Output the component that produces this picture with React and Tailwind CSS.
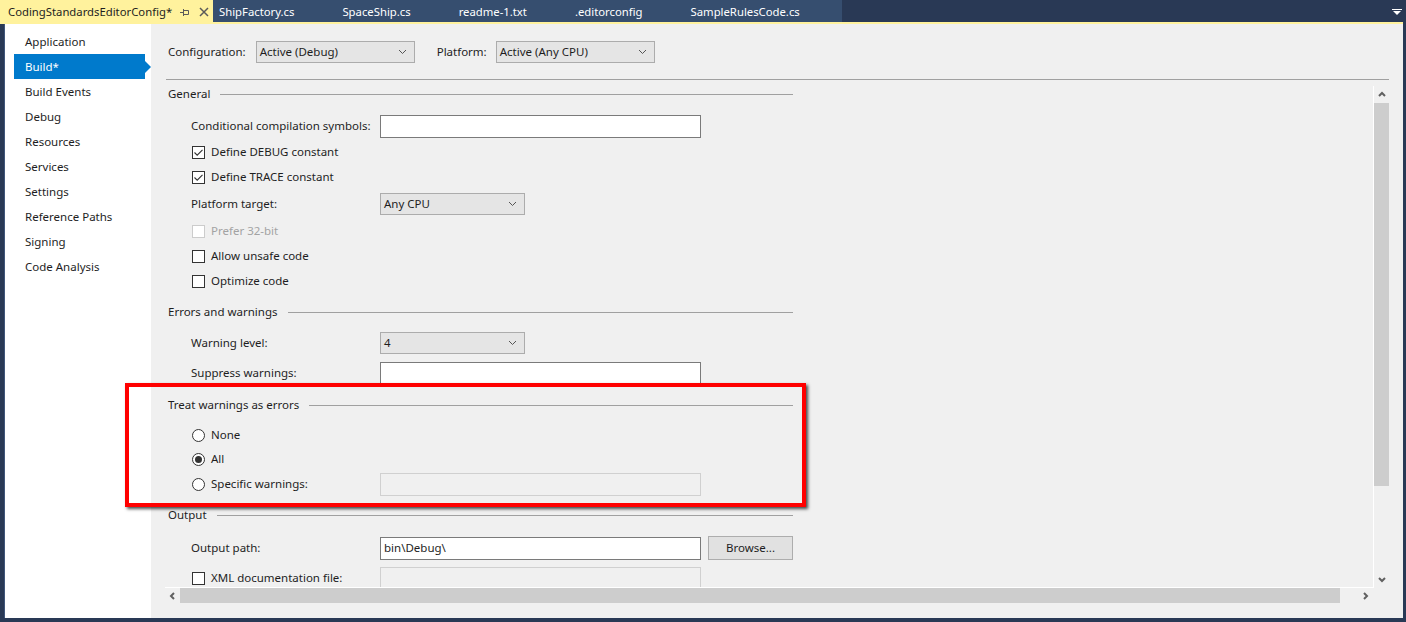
import React from 'react';

const tabs = ['ShipFactory.cs', 'SpaceShip.cs', 'readme-1.txt', '.editorconfig', 'SampleRulesCode.cs'];
const navItems = ['Application', 'Build*', 'Build Events', 'Debug', 'Resources', 'Services', 'Settings', 'Reference Paths', 'Signing', 'Code Analysis'];

function Chevron({ dir = 'down', className = '' }) {
  const paths = {
    down: 'M1 1 L4.5 4.5 L8 1',
    up: 'M1 4.5 L4.5 1 L8 4.5',
  };
  return (
    <svg width="9" height="6" viewBox="0 0 9 6" className={className}>
      <path d={paths[dir]} fill="none" stroke="#555" strokeWidth="1" />
    </svg>
  );
}

function ScrollArrow({ dir }) {
  const d = {
    up: 'M1 5 L4 2 L7 5',
    down: 'M1 2 L4 5 L7 2',
    left: 'M5 1 L2 4 L5 7',
    right: 'M2 1 L5 4 L2 7',
  }[dir];
  return (
    <svg width="8" height="8" viewBox="0 0 8 8">
      <path d={d} fill="none" stroke="#606060" strokeWidth="2" />
    </svg>
  );
}

function Select({ value, width }) {
  return (
    <div className={`flex items-center justify-between h-[22px] bg-[#e5e5e5] border border-[#acacac] pl-[3px] pr-[7px] ${width}`}>
      <span>{value}</span>
      <Chevron />
    </div>
  );
}

function TextBox({ value, disabled }) {
  return (
    <div
      className={
        disabled
          ? 'w-[321px] h-[23px] bg-[#f0f0f0] border border-[#d0d0d0]'
          : 'w-[321px] h-[23px] bg-white border border-[#7a7a7a] flex items-center pl-[3px]'
      }
    >
      {value}
    </div>
  );
}

function Checkbox({ checked, disabled }) {
  return (
    <div
      className={`w-[13px] h-[13px] shrink-0 bg-white border flex items-center justify-center ${
        disabled ? 'border-[#cccccc]' : 'border-[#333333]'
      }`}
    >
      {checked && (
        <svg width="11" height="11" viewBox="0 0 11 11">
          <path d="M1.5 5.5 L4.2 8.2 L9.5 2.8" fill="none" stroke="#333" strokeWidth="1.1" />
        </svg>
      )}
    </div>
  );
}

function Radio({ checked }) {
  return (
    <div className="w-[13px] h-[13px] shrink-0 rounded-full bg-white border border-[#333333] flex items-center justify-center">
      {checked && <div className="w-[7px] h-[7px] rounded-full bg-[#333333]" />}
    </div>
  );
}

function Header({ title, className }) {
  return (
    <div className={`flex items-center h-[24px] w-[625px] ${className}`}>
      <span>{title}</span>
      <div className="flex-1 ml-[10px] h-px bg-[#a0a0a0]" />
    </div>
  );
}

export default function App() {
  return (
    <div className="relative w-[1406px] h-[622px] bg-[#293955] flex flex-col overflow-hidden font-['Noto_Sans',sans-serif] text-[11.5px] text-[#1e1e1e]">
      {/* Tab strip */}
      <div className="flex h-[22px] shrink-0 text-[11.3px]">
        <div className="flex items-center w-[213px] shrink-0 bg-[#fff29d] pl-[8px] pt-[2px]">
          <span>CodingStandardsEditorConfig*</span>
          <svg width="10" height="9" viewBox="0 0 10 9" className="ml-[8px]">
            <path d="M0 4.5 H3 M3.5 1 V8 M3.5 2.5 H8.5 V6.5 H3.5" fill="none" stroke="#5a5a5a" strokeWidth="1" />
          </svg>
          <svg width="10" height="10" viewBox="0 0 10 10" className="ml-[9px]">
            <path d="M1 1 L9 9 M9 1 L1 9" stroke="#5a5a5a" strokeWidth="1.5" />
          </svg>
        </div>
        <div className="flex bg-[#364e6f] text-white">
          {tabs.map((t) => (
            <div key={t} className="flex items-center pl-[6px] pr-[42px] pt-[2px]">
              {t}
            </div>
          ))}
        </div>
        <div className="flex-1" />
        <div className="flex items-center pr-[4px] pt-[2px]">
          <svg width="10" height="7" viewBox="0 0 10 7">
            <path d="M0 0 H10 V1 H0 Z M1 2 H9 L5 6 Z" fill="#ffffff" />
          </svg>
        </div>
      </div>
      <div className="h-[2px] mr-[3px] bg-[#fff29d] shrink-0" />

      {/* Body */}
      <div className="flex h-[594px] ml-[4px] mr-[3px]">
        {/* Nav */}
        <div className="w-[147px] shrink-0 bg-white pt-[5px] border-l border-[#40567a]">
          {navItems.map((item) =>
            item === 'Build*' ? (
              <div key={item} className="flex items-center h-[25px]">
                <div className="flex items-center ml-[9px] w-[131px] h-[25px] bg-[#007acc] text-white pl-[11px]">
                  {item}
                </div>
                <div className="w-0 h-0 border-l-[6px] border-l-[#007acc] border-y-[6px] border-y-transparent" />
              </div>
            ) : (
              <div key={item} className="flex items-center h-[25px] pl-[20px]">
                {item}
              </div>
            )
          )}
        </div>

        {/* Main */}
        <div className="flex-1 bg-[#f0f0f0] flex flex-col">
          <div className="flex items-center pt-[17px] pl-[17px]">
            <span>Configuration:</span>
            <div className="ml-[10px]">
              <Select value="Active (Debug)" width="w-[159px]" />
            </div>
            <span className="ml-[22px]">Platform:</span>
            <div className="ml-[9px]">
              <Select value="Active (Any CPU)" width="w-[159px]" />
            </div>
          </div>
          <div className="mt-[16px] ml-[15px] mr-[14px] h-px bg-[#a0a0a0] shrink-0" />

          {/* Scroll region */}
          <div className="flex flex-col ml-[14px] mr-[14px] h-[523px]">
            <div className="flex h-[508px]">
              <div className="flex-1 border-b border-white overflow-hidden pt-[2px]">
                <Header title="General" className="ml-[3px]" />

                <div className="flex items-center h-[24px] mt-[8px] pl-[26px]">
                  <div className="w-[189px]">Conditional compilation symbols:</div>
                  <TextBox />
                </div>
                <div className="flex items-center h-[24px] mt-[2px] pl-[27px] gap-[6px]">
                  <Checkbox checked />
                  <span>Define DEBUG constant</span>
                </div>
                <div className="flex items-center h-[24px] mt-[1px] pl-[27px] gap-[6px]">
                  <Checkbox checked />
                  <span>Define TRACE constant</span>
                </div>
                <div className="flex items-center h-[24px] mt-[3px] pl-[26px]">
                  <div className="w-[189px]">Platform target:</div>
                  <Select value="Any CPU" width="w-[145px]" />
                </div>
                <div className="flex items-center h-[24px] mt-[3px] pl-[27px] gap-[6px] text-[#a3a3a3]">
                  <Checkbox disabled />
                  <span>Prefer 32-bit</span>
                </div>
                <div className="flex items-center h-[24px] mt-[1px] pl-[27px] gap-[6px]">
                  <Checkbox />
                  <span>Allow unsafe code</span>
                </div>
                <div className="flex items-center h-[24px] mt-[1px] pl-[27px] gap-[6px]">
                  <Checkbox />
                  <span>Optimize code</span>
                </div>

                <Header title="Errors and warnings" className="ml-[3px] mt-[7px]" />
                <div className="flex items-center h-[24px] mt-[7px] pl-[26px]">
                  <div className="w-[189px]">Warning level:</div>
                  <Select value="4" width="w-[145px]" />
                </div>
                <div className="flex items-center h-[24px] mt-[6px] pl-[26px]">
                  <div className="w-[189px]">Suppress warnings:</div>
                  <TextBox />
                </div>

                <Header title="Treat warnings as errors" className="ml-[3px] mt-[8px]" />
                <div className="flex items-center h-[24px] mt-[6px] pl-[27px] gap-[6px]">
                  <Radio />
                  <span>None</span>
                </div>
                <div className="flex items-center h-[24px] pl-[27px] gap-[6px]">
                  <Radio checked />
                  <span>All</span>
                </div>
                <div className="flex items-center h-[24px] mt-[1px] pl-[27px]">
                  <div className="flex items-center gap-[6px] w-[188px]">
                    <Radio />
                    <span>Specific warnings:</span>
                  </div>
                  <TextBox disabled />
                </div>

                <Header title="Output" className="ml-[3px] mt-[7px]" />
                <div className="flex items-center h-[24px] mt-[9px] pl-[26px]">
                  <div className="w-[189px]">Output path:</div>
                  <TextBox value="bin\Debug\" />
                  <div className="ml-[7px] w-[85px] h-[24px] flex items-center justify-center bg-[#e1e1e1] border border-[#adadad]">
                    Browse...
                  </div>
                </div>
                <div className="flex items-center h-[24px] mt-[6px] pl-[27px]">
                  <div className="flex items-center gap-[6px] w-[188px]">
                    <Checkbox />
                    <span>XML documentation file:</span>
                  </div>
                  <TextBox disabled />
                </div>
              </div>

              {/* Vertical scrollbar */}
              <div className="w-[16px] shrink-0 mt-[6px] border-l border-white flex flex-col">
                <div className="h-[17px] flex items-center justify-center">
                  <ScrollArrow dir="up" />
                </div>
                <div className="h-[383px] bg-[#cdcdcd]" />
                <div className="flex-1" />
                <div className="h-[17px] flex items-center justify-center">
                  <ScrollArrow dir="down" />
                </div>
              </div>
            </div>

            {/* Horizontal scrollbar */}
            <div className="flex h-[15px]">
              <div className="w-[15px] flex items-center justify-center">
                <ScrollArrow dir="left" />
              </div>
              <div className="w-[1160px] bg-[#cdcdcd]" />
              <div className="flex-1" />
              <div className="w-[15px] flex items-center justify-center">
                <ScrollArrow dir="right" />
              </div>
              <div className="w-[16px]" />
            </div>
          </div>
        </div>
      </div>

      {/* Red highlight box */}
      <div className="absolute left-[125px] top-[383px] w-[681px] h-[124px] border-4 border-[#ff0000] shadow-[2px_2px_3px_rgba(0,0,0,0.7)]" />
    </div>
  );
}
